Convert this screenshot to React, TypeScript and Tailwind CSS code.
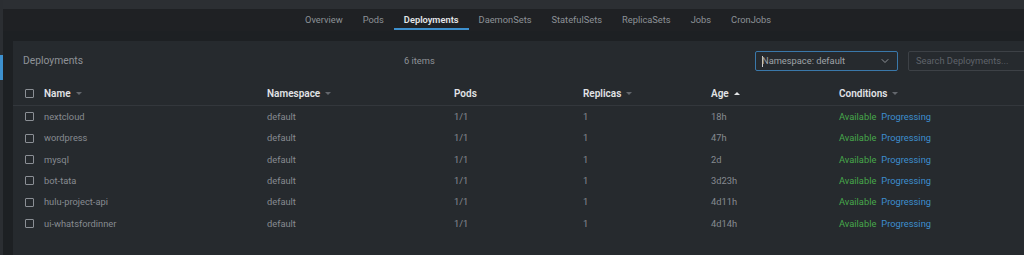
import { ChevronDown } from "lucide-react";

const tabs = ["Overview", "Pods", "Deployments", "DaemonSets", "StatefulSets", "ReplicaSets", "Jobs", "CronJobs"];

const rows = [
  { name: "nextcloud", age: "18h" },
  { name: "wordpress", age: "47h" },
  { name: "mysql", age: "2d" },
  { name: "bot-tata", age: "3d23h" },
  { name: "hulu-project-api", age: "4d11h" },
  { name: "ui-whatsfordinner", age: "4d14h" },
];

function Checkbox() {
  return <span className="block w-[9px] h-[9px] border-[1.5px] border-[#8b8f95] rounded-[1px]" />;
}

function Caret({ up }: { up?: boolean }) {
  return up ? (
    <span className="ml-[5px] inline-block w-0 h-0 border-x-[3px] border-x-transparent border-b-[3px] border-b-[#e3e5e8]" />
  ) : (
    <span className="ml-[5px] inline-block w-0 h-0 border-x-[3px] border-x-transparent border-t-[3px] border-t-[#63676d]" />
  );
}

const cols = "grid grid-cols-[19px_223px_187px_129px_128px_128px_1fr] items-center";

export default function App() {
  return (
    <div className="w-[1024px] h-[255px] overflow-hidden flex bg-[#1d1f22] font-['Roboto',sans-serif] text-[9.3px]">
      <div className="w-[3px] shrink-0 bg-[#2b2e32] flex flex-col">
        <div className="h-[55px]" />
        <div className="h-[25px] bg-[#3d90ce]" />
      </div>
      <div className="flex-1 flex flex-col">
        <div className="h-[9px] bg-[#2c2f33]" />
        <div className="h-[22px] bg-[#1f2124] flex pl-[292px]">
          <div className="flex h-full">
            {tabs.map((t) => (
              <div
                key={t}
                className={
                  t === "Deployments"
                    ? "relative px-[10px] flex items-center text-[#e4e6e9] font-semibold"
                    : "relative px-[10px] flex items-center text-[#8d9197]"
                }
              >
                {t}
                {t === "Deployments" && (
                  <span className="absolute left-0 right-0 bottom-[1px] h-[2px] bg-[#3d90ce]" />
                )}
              </div>
            ))}
          </div>
        </div>
        <div className="flex-1 bg-[#1d2023] pl-[10px] pt-[10px]">
          <div className="h-full bg-[#262a2e] flex flex-col">
            <div className="h-[40px] flex items-center pl-[10px]">
              <div className="w-[381px] text-[10.3px] text-[#8e9298]">Deployments</div>
              <div className="w-[351px] text-[#8e9298]">6 items</div>
              <div className="w-[143px] h-[20px] border border-[#3a78aa] rounded-[2px] flex items-center pl-[6px] pr-[6px] text-[#9fa3a8]">
                <span className="w-[1px] h-[11px] bg-[#c9ccd0] mr-[-1px]" />
                <span className="flex-1">Namespace: default</span>
                <ChevronDown size={12} strokeWidth={2} className="text-[#8d9197]" />
              </div>
              <div className="ml-[10px] w-[130px] h-[20px] border border-[#3d4146] rounded-[2px] flex items-center pl-[7px] text-[#5f636a]">
                Search Deployments...
              </div>
            </div>
            <div className={`${cols} h-[25px] pl-[12px] border-b border-[#33373c] text-[#e1e3e6] text-[10px] font-semibold`}>
              <Checkbox />
              <div className="flex items-center">Name<Caret /></div>
              <div className="flex items-center">Namespace<Caret /></div>
              <div className="flex items-center">Pods</div>
              <div className="flex items-center">Replicas<Caret /></div>
              <div className="flex items-center">Age<Caret up /></div>
              <div className="flex items-center">Conditions<Caret /></div>
            </div>
            {rows.map((r) => (
              <div key={r.name} className={`${cols} h-[21.4px] pl-[12px] text-[#878b91]`}>
                <Checkbox />
                <div>{r.name}</div>
                <div>default</div>
                <div>1/1</div>
                <div>1</div>
                <div>{r.age}</div>
                <div className="flex gap-[5px]">
                  <span className="text-[#47a84b]">Available</span>
                  <span className="text-[#3d8ecf]">Progressing</span>
                </div>
              </div>
            ))}
          </div>
        </div>
      </div>
    </div>
  );
}
